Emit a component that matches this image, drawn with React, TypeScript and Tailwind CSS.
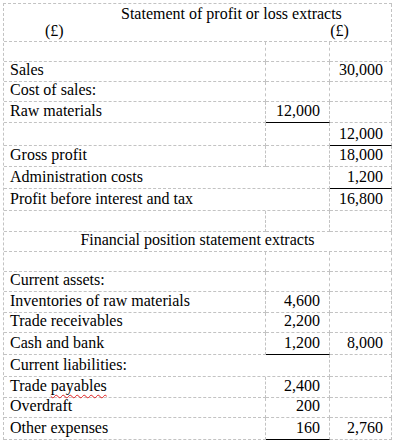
import React from "react";

type Row = {
  h: number;
  label?: string;
  c2?: string;
  c3?: string;
  merge12?: boolean;
  solid2?: boolean;
  solid3?: boolean;
  full?: string;
  squiggle?: boolean;
};

const rows: Row[] = [
  { h: 20 },
  { h: 20, label: "Sales", c3: "30,000" },
  { h: 20, label: "Cost of sales:" },
  { h: 21, label: "Raw materials", c2: "12,000", solid2: true },
  { h: 23, c3: "12,000", solid3: true },
  { h: 21, label: "Gross profit", c3: "18,000" },
  { h: 22, label: "Administration costs", merge12: true, c3: "1,200", solid3: true },
  { h: 22, label: "Profit before interest and tax", merge12: true, c3: "16,800" },
  { h: 21 },
  { h: 20, full: "Financial position statement extracts" },
  { h: 20 },
  { h: 20, label: "Current assets:" },
  { h: 21, label: "Inventories of raw materials", c2: "4,600" },
  { h: 20, label: "Trade receivables", c2: "2,200" },
  { h: 22, label: "Cash and bank", c2: "1,200", solid2: true, c3: "8,000" },
  { h: 22, label: "Current liabilities:", merge12: true },
  { h: 21, label: "Trade payables", c2: "2,400", squiggle: true },
  { h: 20, label: "Overdraft", c2: "200" },
  { h: 22, label: "Other expenses", c2: "160", solid2: true, c3: "2,760" },
];

const cellBase =
  "flex items-end pb-[4px] leading-[15px] border-r border-b border-dashed border-[#c3c3c3] box-border";

function Label({ r }: { r: Row }) {
  if (r.squiggle) {
    return (
      <span>
        Trade{" "}
        <span className="underline decoration-wavy decoration-[#e02020] decoration-1 underline-offset-[3px]">
          payables
        </span>
      </span>
    );
  }
  return <span>{r.label}</span>;
}

export default function App() {
  return (
    <div
      className="w-[398px] h-[444px] bg-white pt-[3px] pl-[3px] text-black text-[16px]"
      style={{ fontFamily: '"Liberation Serif", "Times New Roman", serif' }}
    >
      <div className="w-[389px] border-l border-t border-dashed border-[#c3c3c3]">
        {/* header */}
        <div className="h-[38px] border-r border-b border-dashed border-[#c3c3c3] pt-[0.5px] leading-[17px]">
          <div className="pl-[117px] whitespace-nowrap">Statement of profit or loss extracts</div>
          <div className="flex">
            <div className="w-[262px] pl-[41px]">(£)</div>
            <div className="w-[64px]" />
            <div className="w-[62px] pl-[1px]">(£)</div>
          </div>
        </div>
        {rows.map((r, i) => {
          if (r.full) {
            return (
              <div key={i} className="flex" style={{ height: r.h }}>
                <div className={`${cellBase} w-[389px] justify-center`}>{r.full}</div>
              </div>
            );
          }
          return (
            <div key={i} className="flex" style={{ height: r.h }}>
              {r.merge12 ? (
                <div className={`${cellBase} w-[326px] pl-[6px] whitespace-nowrap`}>
                  {r.label && <Label r={r} />}
                </div>
              ) : (
                <>
                  <div className={`${cellBase} w-[262px] pl-[6px] whitespace-nowrap`}>
                    {r.label && <Label r={r} />}
                  </div>
                  <div
                    className={`${cellBase} w-[64px] justify-end pr-[9px] ${
                      r.solid2 ? "[border-bottom-style:solid] border-b-black" : ""
                    }`}
                  >
                    {r.c2}
                  </div>
                </>
              )}
              <div
                className={`${cellBase} w-[62px] justify-end pr-[8px] ${
                  r.solid3 ? "[border-bottom-style:solid] border-b-black" : ""
                }`}
              >
                {r.c3}
              </div>
            </div>
          );
        })}
      </div>
    </div>
  );
}
